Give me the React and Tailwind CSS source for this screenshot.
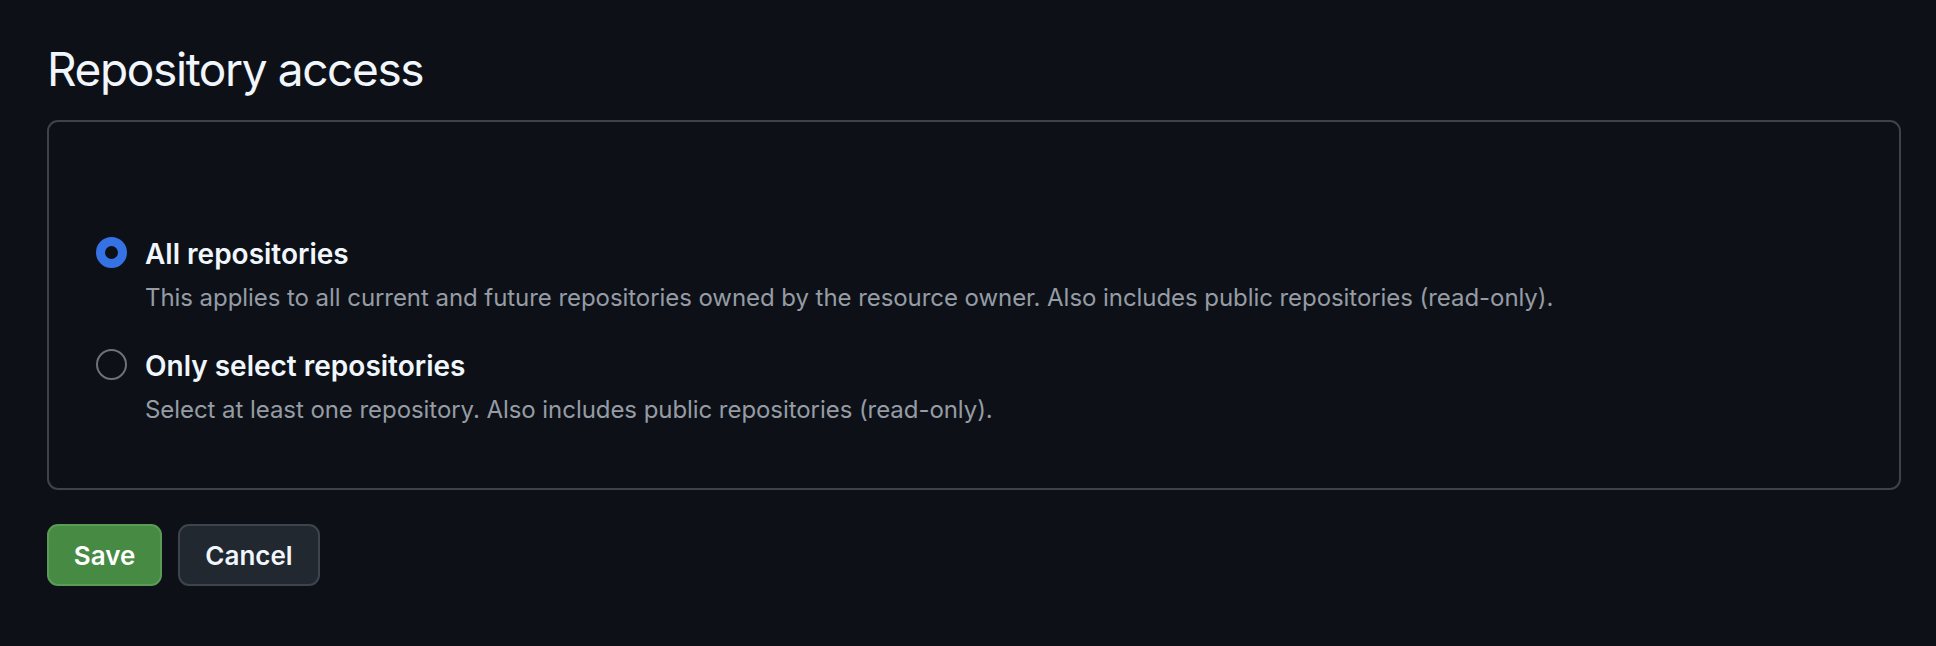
import React from "react";

function Radio({ checked }) {
  return checked ? (
    <span className="mt-[1px] block h-[31px] w-[31px] shrink-0 rounded-full border-[9px] border-[#3572e3] bg-[#0d1117]" />
  ) : (
    <span className="mt-[1px] block h-[31px] w-[31px] shrink-0 rounded-full border-2 border-[#6b727b] bg-[#0d1117]" />
  );
}

function Option({ checked, label, desc, className = "" }) {
  return (
    <div className={"flex items-start gap-[18px] " + className}>
      <Radio checked={checked} />
      <div className="flex flex-col">
        <div className="text-[28px] leading-[36px] font-semibold text-[#f0f6fc]">{label}</div>
        <div className="mt-[10px] text-[24px] leading-[32px] tracking-[-0.06px] text-[#959ca5]">{desc}</div>
      </div>
    </div>
  );
}

export default function App() {
  return (
    <div
      className="min-h-screen bg-[#0d1117] pl-[47px] pr-[35px] pt-[41px]"
      style={{ fontFamily: "Inter, 'Noto Sans', sans-serif" }}
    >
      <h2 className="text-[46px] leading-[56px] font-normal tracking-[-0.03em] text-[#f0f6fc]">
        Repository access
      </h2>
      <div className="mt-[23px] rounded-[11px] border-2 border-[#3d434b] pl-[47px] pt-[114px] pb-[62px]">
        <Option
          checked
          label="All repositories"
          desc="This applies to all current and future repositories owned by the resource owner. Also includes public repositories (read-only)."
        />
        <Option
          className="mt-[34px]"
          label="Only select repositories"
          desc="Select at least one repository. Also includes public repositories (read-only)."
        />
      </div>
      <div className="mt-[34px] flex gap-[16px]">
        <button className="flex h-[62px] w-[115px] items-center justify-center rounded-[11px] border-2 border-[#5b9b56] bg-[#468a43] text-[26px] font-semibold text-white">
          Save
        </button>
        <button className="flex h-[62px] w-[142px] items-center justify-center rounded-[11px] border-2 border-[#3d444d] bg-[#212830] text-[26px] font-semibold text-[#f0f6fc]">
          Cancel
        </button>
      </div>
    </div>
  );
}
